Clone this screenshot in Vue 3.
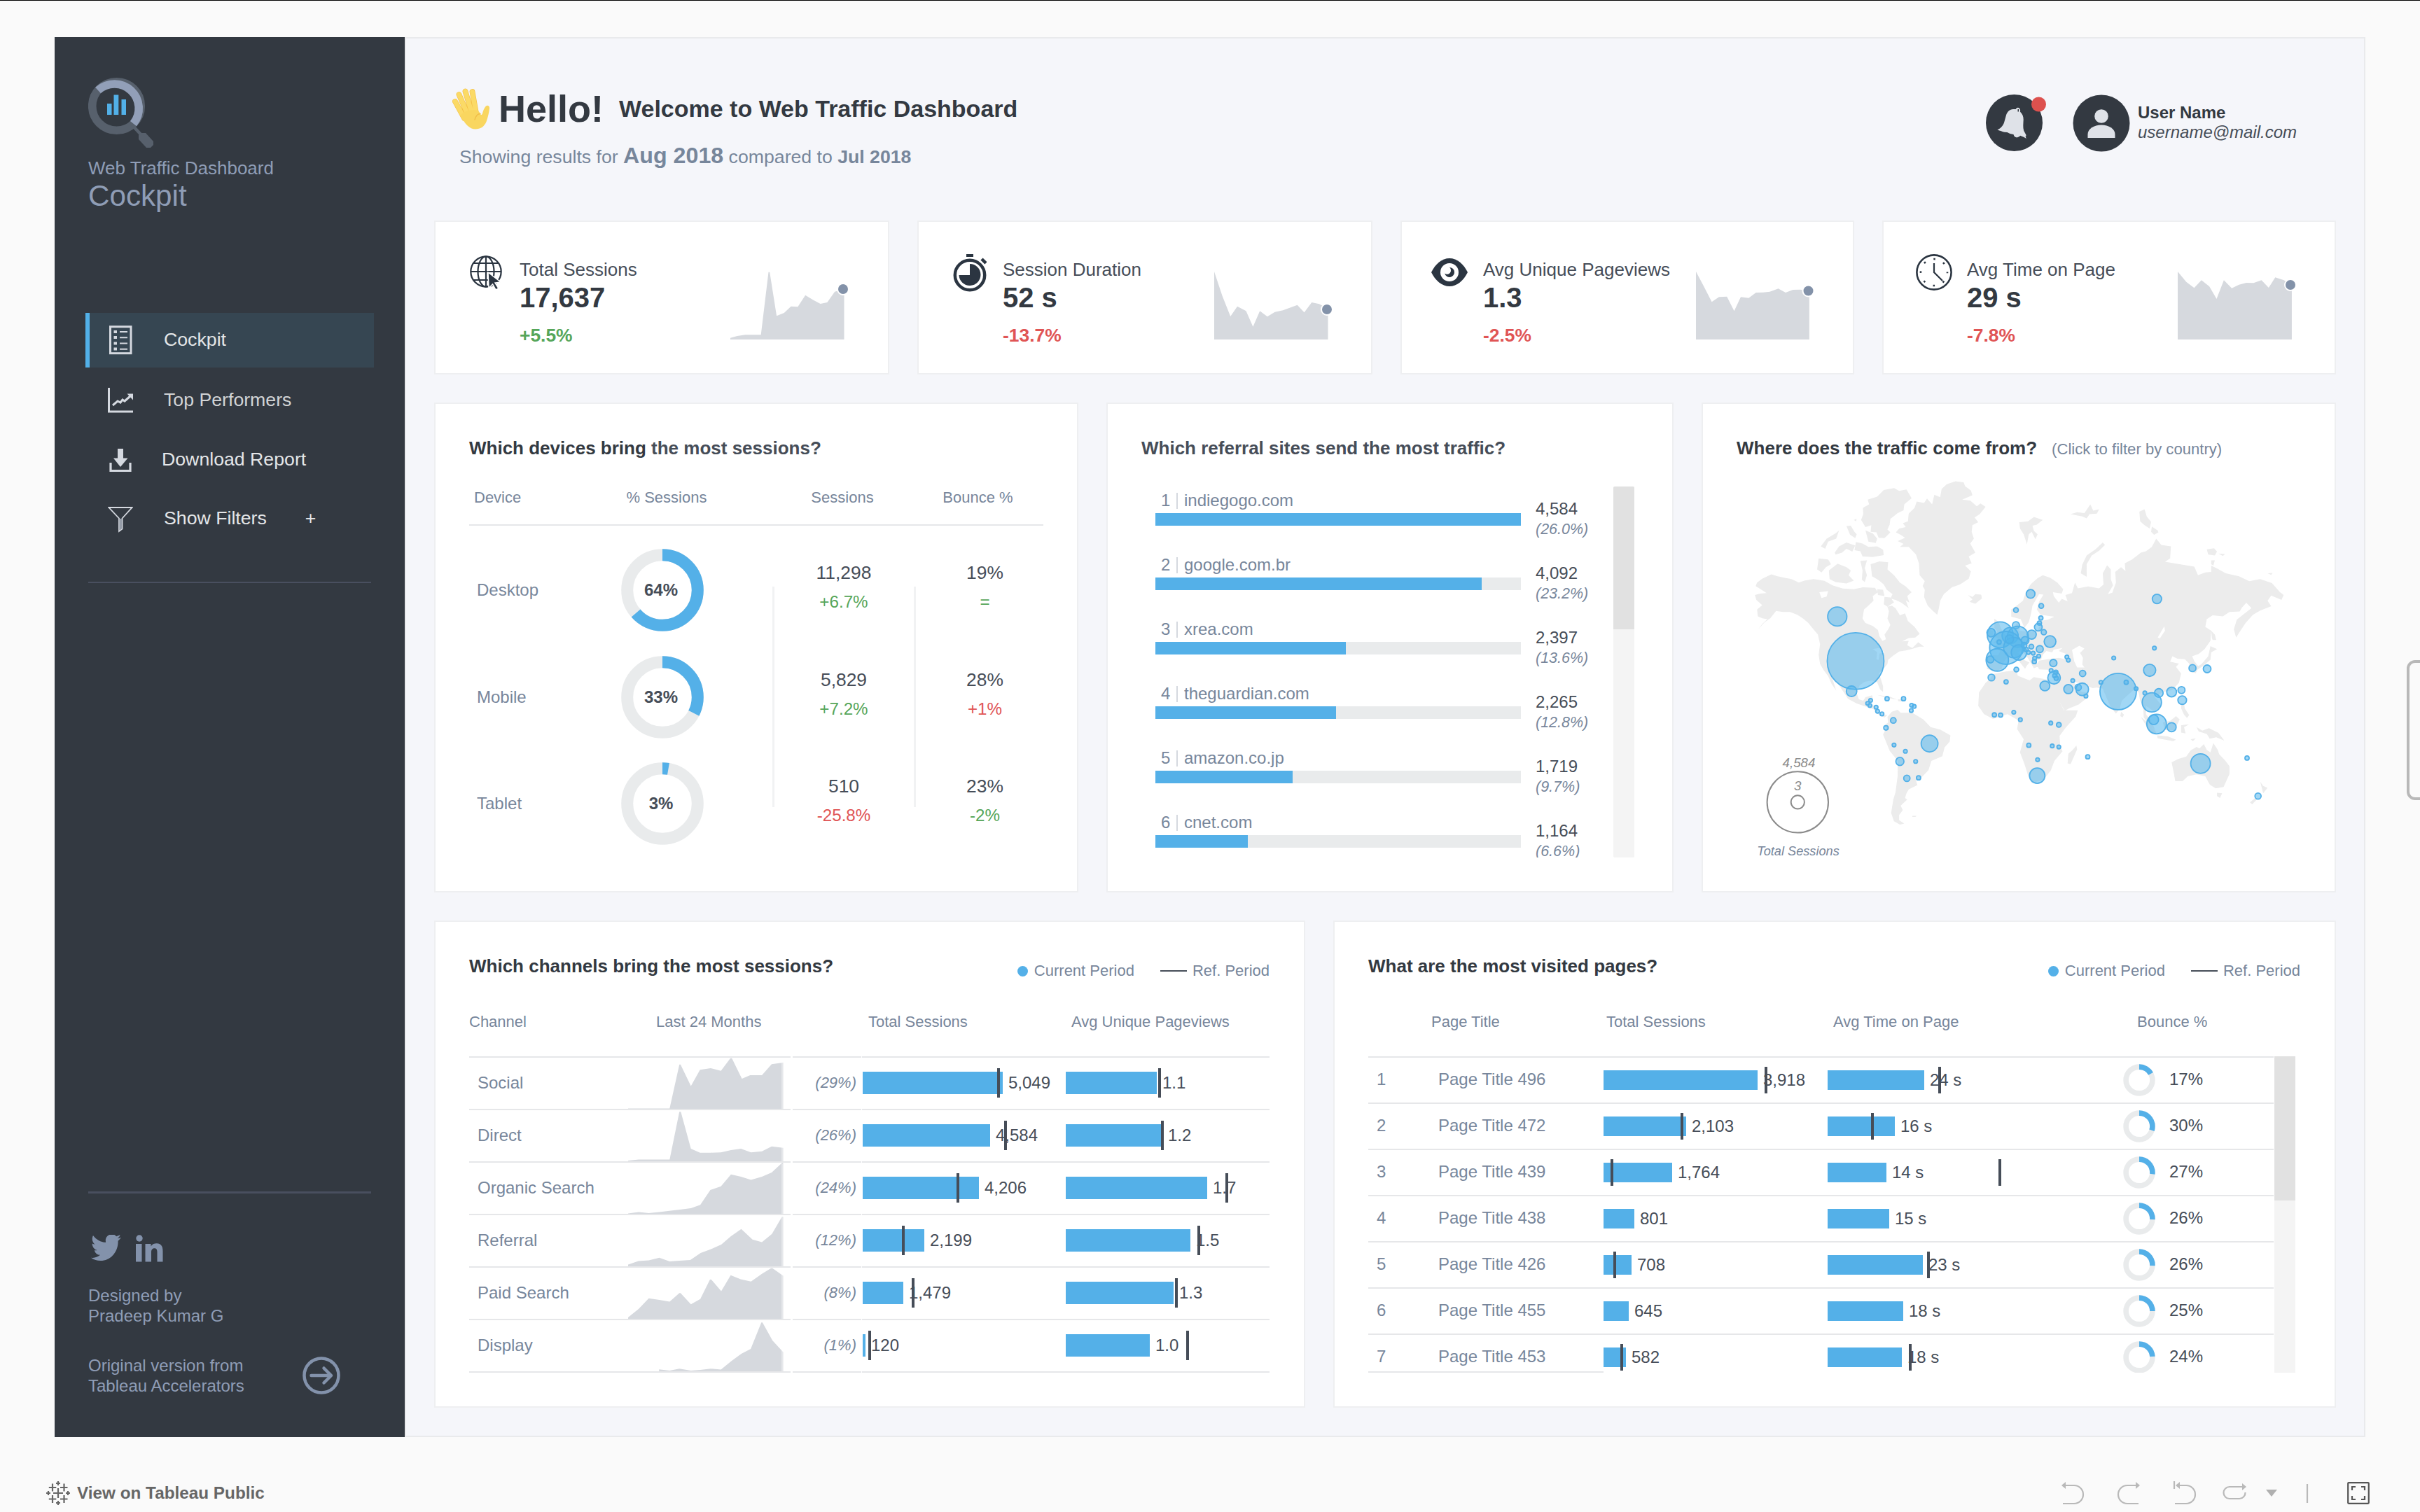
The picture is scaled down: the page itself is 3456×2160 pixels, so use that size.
<script setup>
const nav = [
  { id: 'cockpit', label: 'Cockpit', active: true },
  { id: 'top', label: 'Top Performers' },
  { id: 'download', label: 'Download Report' },
  { id: 'filters', label: 'Show Filters', plus: true },
]

// Scales raw [x, y] samples into local pixels.
const scale = (pts, x0, y0, kx, ky) =>
  pts.map(([x, y]) => [+((x - x0) / kx).toFixed(1), +((y - y0) / ky).toFixed(1)])
const area = (pts, base) =>
  `M${pts[0][0]} ${base} L` + pts.map((p) => p.join(' ')).join(' ') + ` L${pts[pts.length - 1][0]} ${base}Z`

const kpiArea = (pts, x0, kx) => area(scale(pts, x0, 926, kx, 3), 97)

const kpis = [
  {
    id: 'sessions', label: 'Total Sessions', value: '17,637', delta: '+5.5%', good: true, dot: [161, 25],
    path: kpiArea([[497, 1210], [508, 1202], [521, 1197], [546, 1197], [558, 928], [560, 928], [571, 1116], [583, 1103], [594, 1075], [605, 1077], [617, 1027], [630, 1048], [641, 1064], [652, 1058], [664, 1012], [679, 1000]], 497, 1.12),
  },
  {
    id: 'duration', label: 'Session Duration', value: '52 s', delta: '-13.7%', dot: [161, 54],
    path: kpiArea([[1270, 926], [1283, 1030], [1296, 1118], [1307, 1075], [1321, 1095], [1332, 1162], [1343, 1095], [1355, 1119], [1367, 1099], [1380, 1092], [1403, 1069], [1414, 1101], [1426, 1058], [1438, 1065], [1452, 1085]], 1270, 1.12),
  },
  {
    id: 'pageviews', label: 'Avg Unique Pageviews', value: '1.3', delta: '-2.5%', dot: [160.5, 27.5],
    path: kpiArea([[470, 926], [482, 990], [494, 1056], [505, 1035], [517, 1033], [528, 1095], [538, 1035], [550, 1039], [561, 1016], [572, 1015], [582, 1012], [595, 999], [606, 1016], [617, 1004], [628, 1003], [642, 1008]], 470, 1.0623),
  },
  {
    id: 'time', label: 'Avg Time on Page', value: '29 s', delta: '-7.8%', dot: [161, 19],
    path: kpiArea([[1200, 926], [1213, 970], [1225, 996], [1236, 963], [1248, 990], [1259, 1043], [1270, 963], [1282, 997], [1293, 982], [1304, 974], [1315, 975], [1327, 963], [1338, 995], [1348, 951], [1361, 963], [1373, 982]], 1200, 1.0623),
  },
]

const devices = [
  { name: 'Desktop', pct: 64, arc: 63.6, sessions: '11,298', sd: '+6.7%', sGood: true, bounce: '19%', bd: '=', bGood: true },
  { name: 'Mobile', pct: 33, arc: 32.5, sessions: '5,829', sd: '+7.2%', sGood: true, bounce: '28%', bd: '+1%', bGood: false },
  { name: 'Tablet', pct: 3, arc: 2.7, sessions: '510', sd: '-25.8%', sGood: false, bounce: '23%', bd: '-2%', bGood: true },
]

const sites = [
  { name: 'indiegogo.com', w: 522, value: '4,584', pct: '(26.0%)' },
  { name: 'google.com.br', w: 466, value: '4,092', pct: '(23.2%)' },
  { name: 'xrea.com', w: 272, value: '2,397', pct: '(13.6%)' },
  { name: 'theguardian.com', w: 258, value: '2,265', pct: '(12.8%)' },
  { name: 'amazon.co.jp', w: 196, value: '1,719', pct: '(9.7%)' },
  { name: 'cnet.com', w: 132, value: '1,164', pct: '(6.6%)' },
]

// Map bubbles: [x, y, radius]
const bubbles = [
  [275, 641, 13.7], [325, 826, 40.5], [314, 951, 7.5], [366, 989, 2.7], [358, 1001, 2.7], [364, 1010, 2.7], [381, 1017, 2.7], [385, 1034, 2.7], [397, 1045, 2.7],
  [411, 982, 3], [456, 982, 3], [478, 1009, 2.7], [485, 1014, 2.7], [477, 1031, 2.7], [428, 1072, 4], [408, 1103, 3.2], [430, 1174, 2.7], [461, 1200, 2.7],
  [446, 1242, 5.8], [489, 1242, 2.7], [527, 1168, 12], [465, 1312, 4.5], [497, 1310, 3], [803, 547, 6.2], [763, 614, 3.4], [832, 597, 3.4], [831, 647, 3],
  [827, 668, 3], [824, 685, 5.5], [839, 706, 3.7], [763, 677, 5], [806, 716, 6.5], [856, 745, 8.4], [720, 717, 18.5], [695, 708, 6], [747, 720, 11.5],
  [768, 725, 15], [736, 771, 23.5], [717, 747, 3], [757, 770, 14.5], [745, 735, 6], [771, 790, 11], [788, 740, 5.5], [712, 821, 16], [693, 819, 5],
  [785, 760, 4], [791, 778, 3], [797, 790, 2.7], [805, 766, 3.4], [810, 793, 2.7], [828, 776, 5], [825, 805, 2.7], [814, 814, 2.7], [813, 828, 3],
  [865, 834, 5.2], [902, 809, 2.7], [906, 822, 2.7], [764, 861, 3.4], [696, 894, 4.8], [736, 912, 3], [859, 865, 2.7], [872, 872, 3], [867, 895, 9],
  [869, 886, 3], [873, 897, 3], [842, 929, 7], [945, 877, 4.5], [918, 907, 2.7], [906, 942, 6.5], [933, 935, 4.5], [944, 943, 9], [954, 971, 2.7],
  [995, 914, 2.7], [1030, 813, 2.7], [1042, 952, 26], [1064, 914, 3], [1091, 940, 2.7], [1115, 958, 2.7], [1141, 772, 2.7], [1148, 568, 6.7],
  [1128, 864, 8.7], [1153, 958, 6.2], [1188, 954, 7], [1215, 946, 5], [1217, 988, 6.2], [1245, 855, 5], [1285, 858, 5.5], [1134, 997, 13.8],
  [1147, 1087, 14], [1139, 1069, 7], [1188, 1100, 6.5], [704, 1049, 3], [721, 1050, 3], [757, 1038, 2.7], [775, 1069, 2.7], [858, 1083, 2.7],
  [880, 1090, 3.4], [798, 1175, 3], [862, 1178, 2.7], [880, 1182, 2.7], [822, 1235, 2.7], [821, 1301, 11], [959, 1223, 3], [1267, 1251, 14],
  [1394, 1228, 3], [1424, 1386, 4.4],
].map(([x, y, r]) => ({ x: x * 0.52296, y: y * 0.34439, r }))

const land = [
  // North and Central America
  'M52 515L56 500 70 484 95 466 112 474 130 480 150 486 170 500 185 492 210 486 240 493 262 512 290 525 320 528 345 520 378 522 386 540 372 556 374 575 360 596 348 612 344 650 352 668 372 680 386 697 390 722 398 742 408 735 404 716 414 694 420 676 412 650 416 620 412 600 424 596 434 606 446 636 460 628 468 660 486 684 500 713 488 728 470 730 452 744 470 742 466 760 480 772 496 748 512 766 500 766 478 776 462 782 444 786 428 803 414 820 412 838 402 856 388 878 394 900 400 930 400 954 392 944 384 914 370 906 350 912 336 926 328 958 334 984 346 990 352 976 370 968 372 980 364 1000 376 1012 382 1034 396 1048 412 1050 404 1060 386 1046 374 1026 352 1014 328 1002 304 982 294 958 278 922 262 900 272 948 260 922 250 888 238 864 228 838 224 800 228 756 222 716 210 694 196 668 182 650 166 634 146 622 126 622 108 618 92 648 76 666 58 696 70 672 84 652 70 648 58 640 56 612 70 594 54 572 50 552 64 546 82 544 66 528Z',
  // Arctic islands
  'M366 424L390 412 414 416 412 446 430 470 446 500 462 516 478 540 466 556 472 584 462 574 470 606 450 584 434 572 420 566 426 548 410 530 402 508 388 490 370 474Z',
  'M224 400L250 404 258 424 244 436 232 458 220 446Z M252 450L276 422 300 436 312 450 306 470 320 492 300 504 270 498 254 486Z',
  'M338 410L356 408 350 440 356 470 350 498 342 488 344 450Z M384 528L400 530 404 556 386 552Z M404 560L420 562 430 582 412 600 402 590Z',
  'M345 190L362 176 358 156 384 144 402 116 430 108 444 120 464 114 478 150 458 176 456 200 440 212 420 236 418 260 412 280 420 292 404 316 388 314 382 292 366 290 368 262 352 270 340 240 346 216Z',
  'M326 332L344 338 360 352 384 350 400 364 402 386 372 394 344 392 338 370 322 366Z M230 350L246 318 270 296 280 284 272 318 250 330 242 360Z M300 266L312 264 322 290 328 300 324 316 310 302Z M280 350L300 334 324 346 316 372 300 360 288 376 270 384 268 376Z M352 284L372 296 384 318 380 336 360 330Z M320 240l8-4-2 10z',
  // Greenland
  'M435 292L444 276 462 270 454 254 468 246 470 214 486 190 492 164 512 170 520 152 534 176 540 136 556 146 560 112 574 92 598 80 620 84 624 100 640 118 644 138 616 156 638 160 656 184 666 172 680 186 664 216 650 230 660 250 644 262 642 290 648 318 638 338 652 376 634 392 642 420 624 430 640 454 634 484 610 508 588 520 566 548 556 576 552 610 548 634 536 618 522 596 512 560 514 530 508 514 514 494 500 470 498 420 490 384 470 352 446 352 456 340 440 328 460 314 448 302Z',
  'M632 552L644 560 652 548 668 550 670 566 652 588 636 580 644 570Z',
  'M772 250L796 246 812 228 836 240 820 260 808 264 812 286 822 300 816 320 806 290 798 300 793 342 784 300 774 276Z M912 216L930 208 950 212 966 176 974 202 990 196 984 214 964 216 956 234 944 226Z',
  'M940 462L944 426 956 388 980 362 1000 334 1006 344 990 368 970 388 956 424 956 476Z',
  'M1100 206L1114 196 1120 226 1132 248 1128 276 1114 262 1102 246Z M1134 268L1150 284 1152 292 1140 302 1132 290Z',
  'M1284 362L1304 358 1312 372 1306 388 1288 384Z M1316 380l18 2-6 8z M1296 408l10 0-4 22-6-6z M1450 462l14-2-4 8z',
  // Eurasia
  'M750 642L750 612 768 592 782 576 790 540 804 506 822 482 836 470 856 480 876 500 892 528 888 546 864 540 866 556 880 584 888 568 904 578 898 552 916 544 924 500 932 524 960 516 990 524 1002 508 1000 462 1012 428 1022 446 1022 486 1028 512 1014 548 1026 542 1036 500 1034 456 1050 436 1062 452 1060 420 1080 404 1104 376 1118 370 1134 352 1146 318 1160 344 1186 350 1184 400 1170 414 1210 424 1250 434 1260 470 1280 458 1296 456 1296 430 1310 440 1336 462 1372 474 1400 494 1430 486 1462 502 1484 540 1494 552 1488 572 1460 554 1450 576 1460 598 1430 616 1410 634 1390 668 1376 700 1364 728 1358 694 1366 654 1384 632 1406 606 1392 584 1380 604 1374 620 1346 622 1328 640 1300 636 1284 652 1280 684 1296 700 1294 742 1278 776 1262 796 1244 806 1250 826 1262 850 1254 876 1240 870 1236 836 1224 818 1204 816 1190 806 1184 828 1208 836 1200 850 1214 878 1208 916 1190 946 1166 954 1150 966 1140 960 1142 976 1158 1004 1156 1020 1138 1034 1126 1020 1118 1012 1118 1046 1128 1066 1136 1086 1144 1114 1128 1090 1112 1060 1110 1012 1102 990 1098 956 1084 946 1068 968 1052 990 1046 1024 1036 1044 1020 1012 1008 970 1000 940 984 936 972 938 952 926 924 912 916 900 928 930 940 952 962 958 956 980 934 1006 908 1022 896 1032 884 1000 868 956 852 918 872 914 874 884 874 866 848 862 826 860 820 840 826 824 850 818 880 812 914 824 900 796 880 784 890 772 866 778 862 790 846 784 836 800 832 818 816 826 826 846 812 856 802 830 790 800 774 784 768 790 784 820 800 832 792 846 788 858 770 824 758 800 738 812 730 830 724 858 704 870 684 858 684 800 714 802 720 784 702 762 724 752 740 728 758 712 760 680 768 664 776 676 772 700 800 704 822 698 828 680 826 660 850 654 868 642 830 634 820 612 826 580 838 550 826 548 808 596 804 630 798 664 786 688 776 652Z',
  // British Isles
  'M704 650L716 664 722 690 738 726 730 744 700 752 714 732 702 724 712 702 704 688Z M690 696l12 4-4 28-16 2z',
  // Africa
  'M700 880L732 870 764 864 768 886 800 906 812 892 852 904 862 934 876 978 894 1030 932 1030 926 1056 900 1100 882 1136 884 1180 890 1200 868 1240 858 1280 838 1318 806 1332 796 1300 786 1252 774 1204 784 1150 766 1108 770 1072 740 1046 700 1066 676 1046 660 1012 662 956 680 916 692 900Z',
  'M928 1176L930 1192 912 1254 904 1250 906 1210 918 1194Z',
  // South America
  'M412 1058L424 1036 440 1028 448 1040 480 1040 510 1068 530 1100 556 1110 584 1134 582 1160 568 1184 562 1220 532 1240 524 1278 504 1310 490 1322 494 1340 470 1358 464 1374 460 1394 466 1400 448 1426 454 1444 444 1464 444 1486 458 1500 446 1504 430 1490 422 1456 428 1400 434 1370 440 1300 440 1240 418 1198 400 1130 408 1108 404 1092 414 1080Z M480 1468l12 0-4 4-8 0z',
  // Oceania
  'M1188 1246L1206 1232 1228 1222 1240 1196 1256 1182 1264 1188 1276 1170 1284 1194 1294 1204 1302 1166 1314 1194 1318 1212 1334 1238 1346 1262 1346 1294 1330 1348 1308 1354 1292 1338 1280 1304 1256 1296 1232 1304 1218 1324 1198 1324 1194 1290Z M1312 1372l14 2-6 20-8-8z M1430 1326L1438 1344 1450 1352 1438 1374 1434 1350Z M1416 1394L1422 1398 1408 1420 1402 1412Z',
  'M1104 1058L1124 1082 1146 1120 1144 1132 1124 1108Z M1148 1134L1178 1138 1200 1152 1192 1158 1150 1146Z M1164 1080L1184 1074 1200 1054 1210 1068 1196 1112 1170 1112Z M1214 1092L1236 1088 1222 1100 1226 1126 1214 1122Z M1256 1100L1272 1114 1290 1104 1316 1124 1332 1156 1310 1142 1292 1148 1284 1128 1262 1118Z M1214 1000l8 2 2 20 12 28-6 12-8-14-8-26z M1240 1150l14-4-8 12z',
  'M1296 700L1306 716 1310 738 1300 738 1298 730Z M1294 764L1312 776 1296 790 1294 820 1274 846 1252 868 1246 862 1270 838 1288 806Z M1050 1036l8 12-4 12-6-6z M384 966L420 974 438 986 410 978Z M440 984l20 2-4 8-14-2z',
].join(' ')

const water =
  'M916 780L936 762 950 774 938 792 946 812 944 840 950 852 930 852 922 826Z M346 636L366 640 386 640 410 600 410 650 396 690 372 676 350 660Z M1150 728L1168 682 1170 700 1156 732Z M226 540l24-4-4 22-14 6z M372 776l22-6 10 22-14 2-2 26-6-2 2-30z'

const ch = (base, pts) => area(scale(pts, 706, base - 73 * 2.1189, 2.3758, 2.1189), 73)
const channels = [
  { name: 'Social', pct: '(29%)', w: 200, ref: 194, value: '5,049', w2: 130, ref2: 134, v2: '1.1',
    path: ch(604, [[706, 603], [847, 603], [880, 470], [884, 470], [919, 535], [950, 486], [986, 481], [1021, 489], [1053, 451], [1058, 451], [1092, 513], [1120, 502], [1160, 502], [1193, 469], [1232, 464]]) },
  { name: 'Direct', pct: '(26%)', w: 182, ref: 204, value: '4,584', w2: 138, ref2: 138, v2: '1.2',
    path: ch(761, [[706, 759], [742, 756], [847, 756], [880, 611], [885, 611], [919, 723], [950, 735], [986, 735], [1021, 734], [1055, 727], [1089, 723], [1123, 734], [1160, 731], [1193, 716], [1232, 720]]) },
  { name: 'Organic Search', pct: '(24%)', w: 166, ref: 136, value: '4,206', w2: 202, ref2: 230, v2: '1.7',
    path: ch(922, [[706, 921], [742, 917], [776, 920], [812, 917], [846, 913], [882, 909], [919, 905], [951, 895], [985, 850], [1021, 839], [1055, 803], [1089, 810], [1123, 819], [1160, 810], [1193, 797], [1227, 769], [1232, 768]]) },
  { name: 'Referral', pct: '(12%)', w: 88, ref: 58, value: '2,199', w2: 178, ref2: 190, v2: '1.5',
    path: ch(1079, [[706, 1074], [741, 1063], [776, 1061], [812, 1053], [847, 1064], [880, 1062], [917, 1060], [952, 1039], [987, 1027], [1022, 1013], [1055, 988], [1090, 966], [1128, 998], [1160, 1006], [1194, 981], [1228, 929], [1232, 929]]) },
  { name: 'Paid Search', pct: '(8%)', w: 58, ref: 72, value: '1,479', w2: 154, ref2: 158, v2: '1.3',
    path: ch(1240, [[706, 1236], [742, 1210], [776, 1178], [812, 1183], [847, 1188], [880, 1162], [884, 1162], [919, 1196], [951, 1180], [984, 1121], [989, 1122], [1022, 1156], [1054, 1108], [1088, 1120], [1123, 1127], [1160, 1104], [1191, 1087], [1196, 1087], [1232, 1110]]) },
  { name: 'Display', pct: '(1%)', w: 4, ref: 10, value: '120', w2: 120, ref2: 174, v2: '1.0',
    path: ch(1396, [[811, 1390], [847, 1394], [880, 1388], [919, 1394], [951, 1392], [986, 1388], [1021, 1391], [1056, 1365], [1090, 1343], [1122, 1328], [1158, 1248], [1162, 1248], [1196, 1303], [1232, 1338]]) },
]

const pages = [
  { title: 'Page Title 496', w: 220, ref: 232, value: '3,918', w2: 138, ref2: 160, v2: '24 s', bounce: 17 },
  { title: 'Page Title 472', w: 118, ref: 112, value: '2,103', w2: 96, ref2: 64, v2: '16 s', bounce: 30 },
  { title: 'Page Title 439', w: 98, ref: 12, value: '1,764', w2: 84, ref2: 246, v2: '14 s', bounce: 27 },
  { title: 'Page Title 438', w: 44, ref: null, value: '801', w2: 88, ref2: null, v2: '15 s', bounce: 26 },
  { title: 'Page Title 426', w: 40, ref: 16, value: '708', w2: 136, ref2: 144, v2: '23 s', bounce: 26 },
  { title: 'Page Title 455', w: 36, ref: null, value: '645', w2: 108, ref2: null, v2: '18 s', bounce: 25 },
  { title: 'Page Title 453', w: 32, ref: 26, value: '582', w2: 106, ref2: 118, v2: '18 s', bounce: 24 },
]
</script>

<template>
  <div class="page">
    <div class="dashboard">
      <aside class="sidebar">
        <svg class="logo" width="96" height="104" viewBox="0 0 96 104" fill="none">
          <circle cx="40.5" cy="41.5" r="34.8" stroke="#57606c" stroke-width="11.6" />
          <path d="M14 19 A34.8 34.8 0 0 1 64.5 66.6" stroke="#929fb8" stroke-width="11.6" />
          <path d="M63 69 L76 83" stroke="#57606c" stroke-width="4.5" />
          <path d="M75 80 h7 l11 12 v5 l-4 4 h-6 l-11 -12 v-6z" fill="#57606c" />
          <path d="M27 38h6.500v16h-6.500z M36.500 25.500h6.800v28.500h-6.800z M47.500 32h6.500v22h-6.500z" fill="#52b0e8" />
        </svg>
        <div class="brand-sub">Web Traffic Dashboard</div>
        <div class="brand">Cockpit</div>

        <nav class="nav">
          <a v-for="n in nav" :key="n.id" :class="['nav-item', 'nav-' + n.id, { active: n.active }]">
            <svg class="nav-icon" width="36" height="42" viewBox="0 0 36 42" fill="none" stroke="#d5d9e0">
              <g v-if="n.id === 'cockpit'">
                <rect x="3.500" y="1.700" width="29.500" height="38" stroke-width="3" />
                <path d="M8.500 9h4.500M8.500 17h4.500M8.500 25.500h4.500M8.500 33.500h4.500" stroke-width="4" />
                <path d="M17 9h11M17 17.300h11M17 25.500h11M17 33.700h11" stroke-width="2" />
              </g>
              <g v-else-if="n.id === 'top'">
                <path d="M1.500 4v34h34.500" stroke-width="3" />
                <path d="M7 29l7-6 4 2 3-4 3 2 8-7" stroke-width="3" />
                <path d="M27.500 12.500H36v9z" fill="#d5d9e0" stroke="none" />
              </g>
              <g v-else-if="n.id === 'download'">
                <path d="M4 25v11.500h28V25" stroke-width="3.200" />
                <path d="M14 5h8v13.500h6.500L18 31 8 18.500h6z" fill="#d5d9e0" stroke="none" />
              </g>
              <g v-else>
                <path d="M1.500 4h33L20.500 19.500v15l-4.500 3.500V19.500z" stroke-width="1.800" />
                <path d="M16.500 20h3.500v14l-3.500 2.500z" fill="#969da8" stroke="none" />
              </g>
            </svg>
            <span class="nav-label">{{ n.label }}</span>
            <span v-if="n.plus" class="nav-plus">+</span>
          </a>
        </nav>
        <div class="side-rule"></div>

        <div class="side-bottom">
          <div class="side-rule"></div>
          <div class="social">
            <svg width="43" height="38" viewBox="0 2.700 24 19.500" preserveAspectRatio="none" fill="#8392ab">
              <path d="M23.950 4.570a10 10 0 01-2.820.770 4.960 4.960 0 002.160-2.720c-.950.550-2 .950-3.130 1.180a4.920 4.920 0 00-8.380 4.480C7.690 8.100 4.070 6.130 1.640 3.160a4.820 4.820 0 00-.670 2.480c0 1.710.870 3.210 2.190 4.100a4.900 4.900 0 01-2.230-.620v.060a4.920 4.920 0 003.950 4.830 5 5 0 01-2.210.080 4.940 4.940 0 004.600 3.420A9.870 9.870 0 010 19.540a13.990 13.990 0 007.550 2.210c9.050 0 14-7.500 14-13.980 0-.210 0-.420-.020-.630a9.940 9.940 0 002.460-2.550z" />
            </svg>
            <svg class="linkedin" width="39" height="39" viewBox="0 0 39 39" fill="#8392ab">
              <circle cx="5" cy="5" r="4.700" />
              <path d="M0 13h8.500v25.500H0z M13.500 13h8v3.500c2-3.200 5-4.200 8-4.200 7 0 9 4.700 9 11v15.200h-8V25c0-3.500-.800-5.800-3.800-5.800-3.500 0-4.700 2.500-4.700 6v13.300h-8.500z" />
            </svg>
          </div>
          <div class="credit">Designed by<br />Pradeep Kumar G</div>
          <div class="origin">
            <div class="credit">Original version from<br />Tableau Accelerators</div>
            <svg width="54" height="54" viewBox="0 0 54 54" fill="none" stroke="#8392ab" stroke-width="4.500">
              <circle cx="27" cy="27" r="24.500" />
              <path d="M12.500 27h27M30.500 16.500L41 27 30.500 37.500" stroke-linecap="round" stroke-linejoin="round" />
            </svg>
          </div>
        </div>
      </aside>

      <main class="main">
        <header class="header">
          <div class="greeting">
            <div class="hello-row">
              <svg width="54" height="59" viewBox="0 0 54 59" fill="none" stroke-linecap="round">
                <g stroke="#f3c048" stroke-width="7.800">
                  <path d="M4 19L17 43M9.500 9L22 38M18.500 4.500L28 36M28.500 5L34 36" />
                </g>
                <g stroke="#fbda66" stroke-width="6.600">
                  <path d="M4 19L17 43M9.500 9L22 38M18.500 4.500L28 36M28.500 5L34 36" />
                </g>
                <path d="M12.500 38C17 32 34 28 38.500 34c1.500 3.500 3 6 4.500 2 1-4 2.500-8 5-10.500 2.500-2 5.500 0 5 3.500-.500 5-2 12-4.500 19-3 7-8.500 10.500-15.500 10.500-9 0-14.500-7.500-20.500-17.500z" fill="#f9d65f" />
                <path d="M32 45c1.500-5.500 4.500-8.500 8-8.500" stroke="#f0bd48" stroke-width="1.300" />
              </svg>
              <h1>Hello!</h1>
              <h2>Welcome to Web Traffic Dashboard</h2>
            </div>
            <p class="period">Showing results for <b class="cur">Aug 2018</b> compared to <b>Jul 2018</b></p>
          </div>
          <div class="user">
            <svg class="bell" width="90" height="82" viewBox="0 0 90 82">
              <circle cx="40.500" cy="40.500" r="40.500" fill="#333941" />
              <path fill="#dfe2e8" fill-rule="evenodd" d="M43 21c.500-2.500 3.500-3 5-1.200 1.200 1.500 1.300 3.200 1 5 3 2.500 4.800 6.500 4.700 11-.200 6-1 11 .500 16l3 5.500c.500 1.500.300 2.500-.700 3l1.500 2.700-4-2.200-5-2c-1 1.500-3.500 3-5.500 2.500-2.500-.500-3.500-2-4-4.300l-5-1-4-2-4-.200c-3-.800-6-2-10-3.300 5-2.500 8.500-6 10-12l2.500-9c1.500-5 5-8 10-8.500zM45.500 21v3.500h1.500v-3.500z" />
              <circle cx="75.500" cy="14" r="10.500" fill="#dd514e" />
            </svg>
            <svg class="avatar" width="82" height="82" viewBox="0 0 82 82">
              <circle cx="41" cy="41" r="40.500" fill="#333941" />
              <circle cx="41" cy="31" r="9.800" fill="#dfe2e8" />
              <path d="M21.500 62v-5c0-8 9-13.500 19.500-13.500S60.500 49 60.500 57v5z" fill="#dfe2e8" />
            </svg>
            <div class="user-text">
              <div class="user-name">User Name</div>
              <div class="user-mail">username@mail.com</div>
            </div>
          </div>
        </header>

        <section class="row kpis">
          <article v-for="k in kpis" :key="k.id" :class="['card', 'kpi', 'kpi-' + k.id]">
            <div class="kpi-icon">
              <svg v-if="k.id === 'sessions'" width="47" height="48" viewBox="0 0 47 48" fill="none" stroke="#2b3541" stroke-width="2.200">
                <circle cx="23" cy="23" r="21.700" />
                <ellipse cx="23" cy="23" rx="11.500" ry="21.700" />
                <path d="M23 1v44M1 23h44M4.500 11h37M4.500 35h37" />
                <path d="M26 24l18 14-8 1 5 8-4 2-4.500-8-5.500 5.500z" fill="#2b3541" stroke="#fff" stroke-width="1.500" />
              </svg>
              <svg v-else-if="k.id === 'duration'" width="48" height="54" viewBox="0 0 48 54" fill="none" stroke="#2b3541">
                <circle cx="24" cy="30" r="21.200" stroke-width="4.500" />
                <path d="M19 2h10" stroke-width="4" />
                <path d="M41 7l6 6" stroke-width="4.500" />
                <path d="M24 14v16H8.500A15.500 15.500 0 1 0 24 14z" fill="#2b3541" stroke="none" />
              </svg>
              <svg v-else-if="k.id === 'pageviews'" width="52" height="40" viewBox="0 0 52 40">
                <path d="M0 20C6 8 15 0 26 0s20 8 26 20c-6 12-15 20-26 20S6 32 0 20z" fill="#2b3541" />
                <circle cx="26" cy="20" r="13" fill="#fff" />
                <path d="M26 13a7 7 0 1 1-6.800 8.500A4.500 4.500 0 0 0 26 13z" fill="#2b3541" />
              </svg>
              <svg v-else width="52" height="52" viewBox="0 0 52 52" fill="none" stroke="#2b3541">
                <circle cx="26" cy="26" r="24.600" stroke-width="2.600" />
                <circle cx="26" cy="26" r="19" stroke-width="2.600" stroke-dasharray="2.600 12.320" stroke-dashoffset="1.300" />
                <path d="M26 13v13l12 12" stroke-width="2.200" />
              </svg>
            </div>
            <div class="kpi-text">
              <div class="kpi-label">{{ k.label }}</div>
              <div class="kpi-value">{{ k.value }}</div>
              <div :class="['kpi-delta', k.good ? 'good' : 'bad']">{{ k.delta }}</div>
            </div>
            <svg class="kpi-spark" width="174" height="97" viewBox="0 0 174 97">
              <path :d="k.path" fill="#d6d9de" />
              <circle :cx="k.dot[0]" :cy="k.dot[1]" r="8" fill="#8392a9" stroke="#fff" stroke-width="2" />
            </svg>
          </article>
        </section>

        <section class="row mid">
          <article class="card devices">
            <h3 class="title">Which devices bring <span class="soft">the most sessions?</span></h3>
            <div class="dev-head">
              <span>Device</span><span>% Sessions</span><span>Sessions</span><span>Bounce %</span>
            </div>
            <div class="dev-body">
              <div v-for="d in devices" :key="d.name" class="dev-row">
                <span class="dev-name">{{ d.name }}</span>
                <div class="donut">
                  <svg width="118" height="118" viewBox="0 0 118 118" fill="none" stroke-width="17">
                    <circle cx="59" cy="59" r="50.300" stroke="#e9ebec" />
                    <circle cx="59" cy="59" r="50.300" stroke="#54b0e8" pathLength="100" :stroke-dasharray="d.arc + ' 100'" transform="rotate(-90 59 59)" />
                  </svg>
                  <b>{{ d.pct }}%</b>
                </div>
                <div class="dev-num">
                  <div>{{ d.sessions }}</div>
                  <div :class="['chg', d.sGood ? 'good' : 'bad']">{{ d.sd }}</div>
                </div>
                <div class="dev-num">
                  <div>{{ d.bounce }}</div>
                  <div :class="['chg', d.bGood ? 'good' : 'bad']">{{ d.bd }}</div>
                </div>
              </div>
              <i class="vline v1"></i><i class="vline v2"></i>
            </div>
          </article>

          <article class="card sites">
            <h3 class="title soft">Which referral sites send the most traffic?</h3>
            <div class="site-wrap">
              <div class="site-list">
                <div v-for="(s, i) in sites" :key="s.name" class="site">
                  <div class="site-left">
                    <div class="site-name"><span class="num">{{ i + 1 }}</span><i class="sep"></i>{{ s.name }}</div>
                    <div class="track"><div class="fill" :style="{ width: s.w + 'px' }"></div></div>
                  </div>
                  <div class="site-right">
                    <div>{{ s.value }}</div>
                    <div class="site-pct">{{ s.pct }}</div>
                  </div>
                </div>
              </div>
              <div class="scroll"><div class="thumb"></div></div>
            </div>
          </article>

          <article class="card map-card">
            <div class="map-title">
              <h3 class="title">Where does the traffic come from?</h3>
              <span>(Click to filter by country)</span>
            </div>
            <svg class="map" width="820" height="590" viewBox="0 0 820 590">
              <g transform="scale(0.52296 0.34439)">
                <path :d="land" fill="#ececec" />
                <path :d="water" fill="#fff" />
              </g>
              <g fill="#54b6ec" fill-opacity=".55" stroke="#52b0e8" stroke-width="1.800">
                <circle v-for="(b, i) in bubbles" :key="i" :cx="b.x" :cy="b.y" :r="b.r" />
              </g>
              <g fill="none" stroke="#8b8b8b" stroke-width="2">
                <circle cx="87.300" cy="485.900" r="43.700" /><circle cx="87.300" cy="485.900" r="9.600" />
              </g>
              <g class="legend-text" text-anchor="middle">
                <text x="89" y="435.500">4,584</text>
                <text x="87.300" y="468.500">3</text>
                <text x="88" y="561.500" class="legend-name">Total Sessions</text>
              </g>
            </svg>
          </article>
        </section>

        <section class="row low">
          <article class="card channels">
            <div class="top">
              <h3 class="title">Which channels bring the most sessions?</h3>
              <div class="legend"><i class="dot"></i>Current Period<i class="dash"></i>Ref. Period</div>
            </div>
            <div class="ch-head"><span>Channel</span><span>Last 24 Months</span><span>Total Sessions</span><span>Avg Unique Pageviews</span></div>
            <div class="ch-body">
              <div class="ch-row ch-first"><i></i><i></i><i></i></div>
              <div v-for="c in channels" :key="c.name" class="ch-row">
                <div class="ch-a">
                  <span>{{ c.name }}</span>
                  <svg width="222" height="73" viewBox="0 0 222 73"><path :d="c.path" fill="#d6d9de" /><path d="M220 2v71" stroke="#fff" stroke-width=".8" /></svg>
                </div>
                <div class="ch-b">{{ c.pct }}</div>
                <div class="ch-c">
                  <div class="meter big">
                    <div class="bar" :style="{ width: c.w + 'px' }"></div><span>{{ c.value }}</span>
                    <i class="ref" :style="{ left: c.ref + 'px' }"></i>
                  </div>
                  <div class="meter big">
                    <div class="bar" :style="{ width: c.w2 + 'px' }"></div><span>{{ c.v2 }}</span>
                    <i class="ref" :style="{ left: c.ref2 + 'px' }"></i>
                  </div>
                </div>
              </div>
            </div>
          </article>

          <article class="card pages">
            <div class="top">
              <h3 class="title">What are the most visited pages?</h3>
              <div class="legend"><i class="dot"></i>Current Period<i class="dash"></i>Ref. Period</div>
            </div>
            <div class="pg-head"><span>Page Title</span><span>Total Sessions</span><span>Avg Time on Page</span><span>Bounce %</span></div>
            <div class="pg-wrap">
              <div class="pg-list">
                <div v-for="(p, i) in pages" :key="p.title" class="pg-row">
                  <div class="pg-a"><span>{{ i + 1 }}</span><span>{{ p.title }}</span></div>
                  <div class="meter">
                    <div class="bar" :style="{ width: p.w + 'px' }"></div><span>{{ p.value }}</span>
                    <i v-if="p.ref !== null" class="ref" :style="{ left: p.ref + 'px' }"></i>
                  </div>
                  <div class="meter">
                    <div class="bar" :style="{ width: p.w2 + 'px' }"></div><span>{{ p.v2 }}</span>
                    <i v-if="p.ref2 !== null" class="ref" :style="{ left: p.ref2 + 'px' }"></i>
                  </div>
                  <div class="pg-bounce">
                    <svg width="46" height="46" viewBox="0 0 46 46" fill="none" stroke-width="7.600">
                      <circle cx="23" cy="23" r="18.900" stroke="#e9ebec" />
                      <circle cx="23" cy="23" r="18.900" stroke="#54b0e8" pathLength="100" :stroke-dasharray="p.bounce + ' 100'" transform="rotate(-90 23 23)" />
                    </svg>
                    <span>{{ p.bounce }}%</span>
                  </div>
                </div>
              </div>
              <div class="scroll pg-scroll"><div class="thumb"></div></div>
            </div>
          </article>
        </section>
      </main>
    </div>

    <footer class="footer">
      <svg width="34" height="34" viewBox="0 0 34 34" fill="none" stroke="#666" stroke-width="2.200">
        <path d="M17 10v14M10 17h14M9 3.500v11M3.800 9h10.500M25.500 3.500v11M20 9h10.500M9 20v11M3.800 25.500h10.500M25.500 20v11M20 25.500h10.500M17 0v6M14 3h6M17 28v6M14 31h6M3 14v6M0 17h6M31 14v6M28 17h6" />
      </svg>
      <span class="view">View on Tableau Public</span>
      <div class="tools">
        <svg width="446" height="36" viewBox="0 0 446 36" fill="none" stroke="#b9b9b9" stroke-width="2.200">
          <path d="M4 7h14a13 13 0 0 1 0 26H2" /><path d="M0 7l6-5v10z" fill="#b9b9b9" stroke="none" />
          <path d="M108 7H94a13 13 0 0 0 0 26h16" /><path d="M112 7l-6-5v10z" fill="#b9b9b9" stroke="none" />
          <path d="M166 7h12a13 13 0 0 1 0 26h-16M161 1v11" /><path d="M163 7l6-5v10z" fill="#b9b9b9" stroke="none" />
          <path d="M258 9h-18a8.500 8.500 0 0 0 0 17h14a8.500 8.500 0 0 0 8.500-9" /><path d="M264 9l-6-5v10z" fill="#b9b9b9" stroke="none" />
          <path d="M292 13h16l-8 10z" fill="#b0b0b0" stroke="none" />
          <path d="M351 5v27" />
          <g stroke="#555">
            <rect x="409.200" y="3.200" width="29.600" height="29.600" rx="1" />
            <path d="M415 14V9h5M428 9h5v5M433 22v5h-5M420 27h-5v-5" />
          </g>
        </svg>
      </div>
    </footer>
    <div class="handle"></div>
  </div>
</template>

<style>
html, body { margin: 0; background: #fafafa; }
</style>

<style scoped>
.page { position: relative; width: 3456px; height: 2160px; box-sizing: border-box; border-top: 1px solid #000; overflow: hidden; background: #fafafa; font-family: "Liberation Sans", Arial, sans-serif; color: #464d58; }
.page * { box-sizing: border-box; }
h1, h2, h3, p { margin: 0; }
svg { display: block; flex: none; }
.good { color: #56a65a; }
.bad { color: #e05555; }

.dashboard { display: flex; width: 3300px; height: 2000px; margin: 52px 0 0 78px; }

.sidebar { width: 500px; height: 2000px; background: #333941; display: flex; flex-direction: column; padding-top: 57px; color: #8f9db6; }
.logo { margin-left: 48px; }
.brand-sub { margin: 8px 0 0 48px; font-size: 26px; line-height: 36px; white-space: nowrap; }
.brand { margin: -3px 0 0 48px; font-size: 42.2px; line-height: 50px; }
.nav { display: flex; flex-direction: column; gap: 7.300px; margin: 142px 44px 0; }
.nav-item { display: flex; align-items: center; height: 78px; border-left: 6px solid transparent; color: #e4e6e8; font-size: 26.7px; padding-left: 26px; }
.nav-item.active { background: #364652; border-left-color: #52b0e8; }
.nav-label { margin-left: 44px; padding-bottom: 2px; white-space: nowrap; }
.nav-top .nav-label, .nav-download .nav-label { padding-bottom: 0; }
.nav-download .nav-label { margin-left: 41px; }
.nav-top .nav-label { color: #d2d4d6; }
.nav-plus { margin-left: 55px; padding-bottom: 3px; }
.side-rule { height: 2px; width: 404px; margin-left: 48px; background: #494f5f; }
.nav + .side-rule { margin-top: 50px; }
.side-bottom { margin-top: auto; height: 351px; }
.side-bottom .side-rule { height: 3px; }
.social { display: flex; align-items: flex-start; margin: 59px 0 0 52px; height: 40px; }
.linkedin { margin-left: 21px; }
.credit { font-size: 24px; line-height: 29px; white-space: nowrap; }
.social + .credit { margin: 32px 0 0 48px; }
.origin { display: flex; align-items: center; margin: 42px 0 0 48px; }
.origin svg { margin-left: auto; margin-right: 92px; }

.main { width: 2800px; height: 2000px; background: #f5f6fa; border: 2px solid #e9eaec; padding: 0 40px; }
.header { display: flex; justify-content: space-between; height: 260px; }
.greeting { padding: 70px 0 0 26px; }
.hello-row { display: flex; align-items: center; height: 60px; color: #333941; white-space: nowrap; }
.hello-row h1 { width: 151px; margin-left: 12px; font-size: 54px; line-height: 60px; }
.hello-row h2 { margin-left: 21px; font-size: 34px; line-height: 60px; }
.period { margin: 17px 0 0 10px; font-size: 26.67px; line-height: 40px; color: #77869b; white-space: nowrap; }
.period .cur { font-size: 32.2px; }
.user { display: flex; align-items: flex-start; width: 500px; padding-top: 80px; }
.bell { overflow: visible; }
.avatar { margin: 0 0 0 34px; }
.user-text { margin: 12px 0 0 11px; font-size: 24px; line-height: 28px; }
.user-name { font-weight: 700; color: #333941; }
.user-mail { font-style: italic; }

.row { display: flex; justify-content: space-between; }
.card { background: #fff; border: 2px solid #eeeff1; }
.title { font-size: 26px; line-height: 32px; color: #333941; white-space: nowrap; }
.soft { color: #464d58; }

.kpis { height: 220px; }
.kpi { display: flex; width: 650px; }
.kpi-pageviews, .kpi-time { width: 648px; }
.kpi-icon { width: 120px; padding: 48px 0 0 49px; }
.kpi-duration .kpi-icon { width: 120px; padding-top: 46px; }
.kpi-pageviews .kpi-icon { width: 116px; padding: 52px 0 0 42px; }
.kpi-time .kpi-icon { width: 119px; padding: 46px 0 0 46px; }
.kpi-text { padding-top: 48px; white-space: nowrap; width: 301px; }
.kpi-label { font-size: 26px; line-height: 40px; }
.kpi-value { font-size: 40px; line-height: 40px; font-weight: 700; color: #333941; }
.kpi-delta { margin-top: 17px; font-size: 26.4px; line-height: 34px; font-weight: 700; }
.kpi-spark { margin: 71px 0 0 0; overflow: visible; }
.kpi-duration .kpi-spark { margin-left: 1px; }
.kpi-pageviews .kpi-spark { margin-left: 3px; }

.mid { margin-top: 40px; height: 700px; }
.mid .title { margin: 47px 0 0 48px; }
.devices { width: 920px; }
.dev-head { display: grid; grid-template-columns: 188px 188px 257px 187px; align-items: center; height: 80px; margin: 15px 0 0 48px; padding-top: 2px; font-size: 22px; color: #77869b; line-height: 34px; width: 820px; border-bottom: 2px solid #e6e7e9; }
.dev-head span { text-align: center; }
.dev-head span:nth-child(1) { text-align: left; padding-left: 7px; }
.dev-head span:nth-child(3) { padding-left: 57px; }
.dev-body { position: relative; margin: 16px 0 0 48px; width: 840px; }
.dev-row { display: grid; grid-template-columns: 182px 188px 65px 200px 203px; align-items: center; height: 152.600px; }
.dev-name { padding-left: 11px; font-size: 24px; color: #77869b; }
.donut { display: grid; place-items: center; }
.donut > * { grid-area: 1 / 1; }
.donut b { font-size: 24px; padding: 0 4px 0 0; }
.dev-num { grid-column: 4; padding-bottom: 8px; text-align: center; font-size: 26.4px; line-height: 42px; }
.dev-num + .dev-num { grid-column: 5; }
.chg { font-size: 24.200px; }
.vline { position: absolute; top: 71px; height: 315px; width: 3px; background: #f1f2f3; }
.v1 { left: 433px; }
.v2 { left: 635px; }

.sites { width: 810px; }
.site-wrap { display: flex; margin: 39px 0 0 68px; height: 530px; }
.site-list { width: 654px; overflow: hidden; }
.site { display: flex; height: 92px; font-size: 24px; }
.site-left { width: 522px; }
.site-name { display: flex; align-items: center; height: 38px; padding: 2px 0 0 8px; color: #77869b; white-space: nowrap; }
.num { width: 22px; }
.sep { width: 2px; height: 23px; background: #d5d9df; margin-right: 9px; }
.track { height: 18px; background: #e9ebec; }
.fill { height: 18px; background: #54b0e8; }
.site-right { padding: 18px 0 0 21px; line-height: 28.500px; }
.site-pct { font-size: 21.500px; font-style: italic; color: #77869b; }
.scroll { width: 30px; background: #f4f4f4; border-radius: 2px; overflow: hidden; }
.thumb { height: 204px; background: #e1e1e1; }

.map-card { width: 906px; }
.map-title { display: flex; align-items: baseline; color: #77869b; font-size: 22.100px; white-space: nowrap; }
.map-title span { margin-left: 21px; }
.map { margin: 4px 0 0 48px; }
.legend-text { font-size: 18.700px; font-style: italic; fill: #8b8b8b; }
.legend-name { fill: #77869b; font-size: 18.200px; }

.low { margin-top: 40px; height: 696px; }
.channels { width: 1244px; }
.pages { width: 1432px; }
.top { display: flex; justify-content: space-between; padding: 48px 49px 0 48px; height: 118px; }
.top .title { margin-top: -1px; }
.legend { display: flex; align-items: center; height: 44px; font-size: 22px; color: #77869b; white-space: nowrap; }
.dot { width: 15px; height: 15px; border-radius: 50%; background: #54b0e8; margin-right: 9px; }
.dash { width: 38px; height: 2px; background: #464d58; margin: 0 8px 0 37px; }
.ch-head, .pg-head { display: grid; height: 74px; line-height: 49px; font-size: 22px; color: #77869b; white-space: nowrap; }
.ch-head { grid-template-columns: 267px 303px 290px auto; margin-left: 48px; }
.ch-body { margin-left: 48px; }
.ch-row { display: grid; grid-template-columns: 459px 101px 583px; height: 75px; width: 1143px; }
.ch-row > * { border-bottom: 2px solid #e6e7e9; }
.ch-row > :nth-child(2) { margin-left: 3px; }
.ch-row > :nth-child(3) { margin-left: 1px; }
.ch-first { height: 2px; }
.ch-a { display: flex; justify-content: space-between; align-items: center; padding: 0 10px 0 12px; font-size: 24px; color: #77869b; }
.ch-a span { padding-bottom: 2px; }
.ch-b { font-size: 22px; font-style: italic; color: #77869b; text-align: right; line-height: 71px; padding-right: 7px; }
.ch-c { display: flex; align-items: center; padding: 0 0 1px 1px; }
.ch-c .meter { width: 290px; flex: none; }
.meter { position: relative; display: flex; align-items: center; height: 38px; font-size: 24px; white-space: nowrap; }
.meter.big { height: 42px; }
.bar { height: 28px; background: #54b0e8; flex: none; }
.big .bar { height: 32px; }
.meter span { margin-left: 8px; line-height: 38px; }
.ref { position: absolute; top: 0; bottom: 0; width: 4px; margin-left: -2px; background: #464d58; }

.pg-head { grid-template-columns: 250px 324px 434px auto; margin-left: 138px; }
.pg-wrap { display: flex; margin-left: 48px; height: 452px; }
.pg-list { width: 1293px; margin-right: 1px; border-top: 2px solid #e6e7e9; height: 452px; overflow: hidden; }
.pg-row { display: grid; grid-template-columns: 336px 320px 422px 215px; align-items: center; height: 66px; border-bottom: 2px solid #e6e7e9; }
.pg-a { display: flex; align-self: start; height: 64px; line-height: 61px; font-size: 24px; color: #77869b; }
.pg-row:last-child .pg-a { height: 54px; border-bottom: 2px solid #e6e7e9; }
.pg-a span:first-child { width: 100px; padding-left: 12px; }
.pg-bounce { display: flex; align-items: center; font-size: 24px; }
.pg-bounce span { margin-left: 20px; padding-bottom: 2px; }
.pg-scroll { border-radius: 0; }
.pg-scroll .thumb { height: 206px; }

.footer { display: flex; align-items: center; height: 107px; padding: 52px 64px 0 66px; }
.view { margin-left: 10px; padding-top: 1px; font-size: 24.300px; font-weight: 700; color: #666; }
.tools { margin-left: auto; margin-right: 2px; }
.handle { position: absolute; top: 942px; right: -20px; width: 39px; height: 200px; border: 4px solid #b8b8b8; border-radius: 12px; background: #fafafa; }
</style>
